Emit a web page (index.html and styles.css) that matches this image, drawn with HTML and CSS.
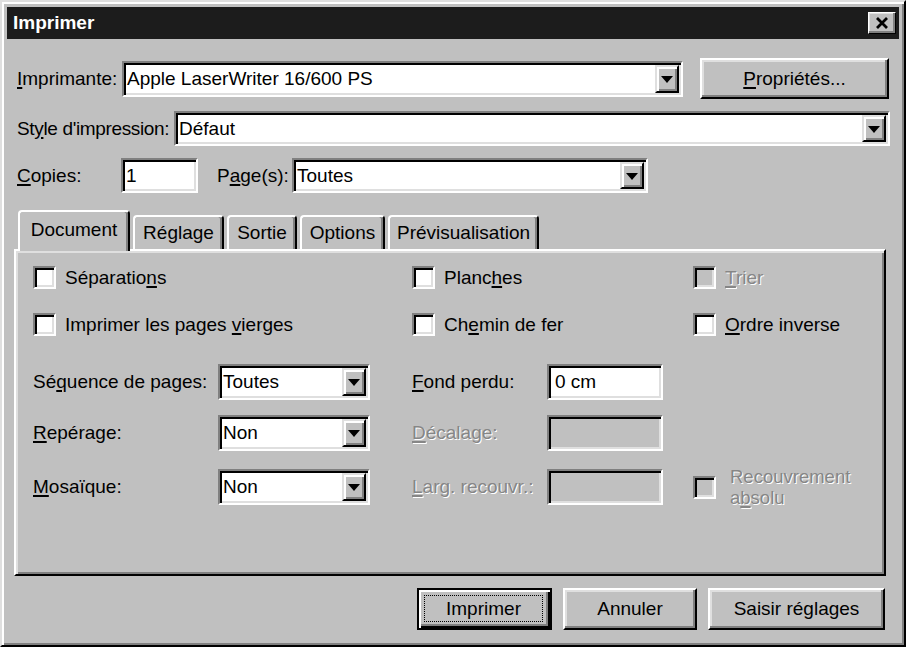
FILE: index.html
```html
<!DOCTYPE html>
<html lang="fr">
<head>
<meta charset="utf-8">
<title>Imprimer</title>
<link rel="stylesheet" href="styles.css">
</head>
<body>
<div class="window">
  <div class="titlebar">
    <span class="title">Imprimer</span>
    <div class="close">
      <svg width="14" height="12" viewBox="0 0 14 12"><path d="M2 1 L12 11 M12 1 L2 11" stroke="#000" stroke-width="2.8" fill="none"/></svg>
    </div>
  </div>
  <div class="content">
    <div class="row r1">
      <span class="lbl w105"><u>I</u>mprimante:</span>
      <div class="field combo w561"><span class="val">Apple LaserWriter 16/600 PS</span><span class="dd"><i class="arrow"></i></span></div>
      <div class="btn props"><span><u>P</u>ropriétés...</span></div>
    </div>
    <div class="row r2">
      <span class="lbl w157 tight">St<u>y</u>le d'impression:</span>
      <div class="field combo w716"><span class="val">Défaut</span><span class="dd"><i class="arrow"></i></span></div>
    </div>
    <div class="row r3">
      <span class="lbl w104"><u>C</u>opies:</span>
      <div class="field w77"><span class="val">1</span></div>
      <span class="lbl w75 ml19">P<u>a</u>ge(s):</span>
      <div class="field combo w356"><span class="val">Toutes</span><span class="dd"><i class="arrow"></i></span></div>
    </div>

    <div class="tabs">
      <div class="tab active t1">Document</div>
      <div class="tab t2">Réglage</div>
      <div class="tab t3">Sortie</div>
      <div class="tab t4">Options</div>
      <div class="tab t5">Prévisualisation</div>
    </div>
    <div class="panel">
      <div class="prow pa">
        <div class="cell"><span class="cb"></span><span>Séparatio<u>n</u>s</span></div>
        <div class="cell"><span class="cb"></span><span>Planc<u>h</u>es</span></div>
        <div class="cell"><span class="cb disabled"></span><span class="dis"><u>T</u>rier</span></div>
      </div>
      <div class="prow pb">
        <div class="cell"><span class="cb"></span><span>Imprimer les pages <u>v</u>ierges</span></div>
        <div class="cell"><span class="cb"></span><span>Ch<u>e</u>min de fer</span></div>
        <div class="cell"><span class="cb"></span><span><u>O</u>rdre inverse</span></div>
      </div>
      <div class="prow pf pf1">
        <div class="cell"><span class="flabel">Sé<u>q</u>uence de pages:</span><div class="field combo w152"><span class="val">Toutes</span><span class="dd"><i class="arrow"></i></span></div></div>
        <div class="cell"><span class="flabel2"><u>F</u>ond perdu:</span><div class="field w116"><span class="val v2">0 cm</span></div></div>
        <div class="cell"></div>
      </div>
      <div class="prow pf pf2">
        <div class="cell"><span class="flabel"><u>R</u>epérage:</span><div class="field combo w152"><span class="val">Non</span><span class="dd"><i class="arrow"></i></span></div></div>
        <div class="cell"><span class="flabel2 dis"><u>D</u>écalage:</span><div class="field disabled w116"></div></div>
        <div class="cell"></div>
      </div>
      <div class="prow pf pf3">
        <div class="cell"><span class="flabel"><u>M</u>osaïque:</span><div class="field combo w152"><span class="val">Non</span><span class="dd"><i class="arrow"></i></span></div></div>
        <div class="cell"><span class="flabel2 dis"><u>L</u>arg. recouvr.:</span><div class="field disabled w116"></div></div>
        <div class="cell"><span class="cb disabled"></span><span class="dis two">Recouvrement<br>a<u>b</u>solu</span></div>
      </div>
    </div>
    <div class="buttons">
      <div class="btn default b1"><span class="focus">Imprimer</span></div>
      <div class="btn b2"><span>Annuler</span></div>
      <div class="btn b3"><span>Saisir réglages</span></div>
    </div>
  </div>
</div>
</body>
</html>
```

FILE: styles.css
```css
html, body {
  margin: 0;
  padding: 0;
}
body {
  background: #ffffff;
  font-family: "Liberation Sans", Arial, sans-serif;
  font-size: 19px;
  color: #000;
}
u {
  text-decoration-thickness: 1.5px;
  text-underline-offset: 2px;
}
.window {
  width: 906px;
  height: 647px;
  box-sizing: border-box;
  background: #c0c0c0;
  border: 2px solid;
  border-color: #dfdfdf #000 #000 #dfdfdf;
  box-shadow: inset 2px 2px #fff, inset -2px -2px #808080;
  padding: 5px;
  display: flex;
  flex-direction: column;
}
.titlebar {
  height: 32px;
  flex: none;
  background: #1c1c1c;
  display: flex;
  align-items: center;
  justify-content: space-between;
  padding: 0 3px 0 6px;
}
.title {
  color: #fff;
  font-weight: bold;
  font-size: 19px;
}
.close {
  width: 28px;
  height: 22px;
  box-sizing: border-box;
  background: #c0c0c0;
  border: 1px solid;
  border-color: #fff #000 #000 #fff;
  box-shadow: inset -2px -2px #808080, inset 1px 1px #dfdfdf;
  display: flex;
  align-items: center;
  justify-content: center;
  padding-bottom: 1px;
}
.content {
  flex: 1;
  display: flex;
  flex-direction: column;
  padding: 0 13px 0 7px;
}
.row {
  display: flex;
  align-items: center;
  margin-left: 3px;
}
.row > * { flex: none; }
.r1 { margin-top: 19px; height: 41px; }
.r2, .r3 { margin-top: 12px; height: 35px; }
.lbl { white-space: nowrap; }
.tight { letter-spacing: -0.35px; }
.w105 { width: 105px; }
.w157 { width: 157px; }
.w104 { width: 104px; }
.w75 { width: 75px; }
.ml19 { margin-left: 19px; }
.w561 { width: 561px; }
.w716 { width: 716px; }
.w77 { width: 77px; }
.w356 { width: 356px; }
.w152 { width: 152px; }
.w116 { width: 116px; }

.field {
  height: 36px;
  box-sizing: border-box;
  border: 2px solid;
  border-color: #808080 #fff #fff #808080;
  box-shadow: inset 2px 2px #000, inset -2px -2px #dfdfdf;
  padding: 2px;
  background: #fff;
  display: flex;
  align-items: center;
  flex: none;
}
.r2 .field, .r3 .field { height: 35px; }
.field.disabled { background: #c0c0c0; }
.val {
  flex: 1;
  padding-left: 1px;
  white-space: nowrap;
  overflow: hidden;
}
.val.v2 { padding-left: 4px; }
.dd {
  flex: none;
  width: 24px;
  align-self: stretch;
  box-sizing: border-box;
  background: #c0c0c0;
  border: 2px solid;
  border-color: #dfdfdf #000 #000 #dfdfdf;
  box-shadow: inset 2px 2px #fff, inset -2px -2px #808080;
  display: flex;
  align-items: center;
  justify-content: center;
}
.arrow {
  width: 0;
  height: 0;
  border-left: 6px solid transparent;
  border-right: 6px solid transparent;
  border-top: 7px solid #000;
  margin-top: 1px;
}
.btn {
  box-sizing: border-box;
  background: #c0c0c0;
  border: 2px solid;
  border-color: #fff #000 #000 #fff;
  box-shadow: inset -2px -2px #808080, inset 2px 2px #dfdfdf;
  display: flex;
  align-items: center;
  justify-content: center;
  flex: none;
  white-space: nowrap;
}
.props { width: 189px; height: 41px; margin-left: 17px; }

.tabs {
  margin-top: 17px;
  height: 39px;
  flex: none;
  display: flex;
  align-items: flex-end;
  padding-left: 4px;
  gap: 3px;
}
.tab {
  height: 34px;
  box-sizing: border-box;
  background: #c0c0c0;
  border: 2px solid;
  border-bottom: none;
  border-color: #fff #000 transparent #fff;
  box-shadow: inset -2px 0 #808080;
  border-radius: 4px 4px 0 0;
  display: flex;
  align-items: center;
  justify-content: center;
  white-space: nowrap;
}
.tab.active {
  height: 41px;
  margin-bottom: -2px;
  position: relative;
  z-index: 1;
  padding-bottom: 4px;
}
.t1 { width: 112px; }
.t2 { width: 91px; }
.t3 { width: 70px; }
.t4 { width: 85px; }
.t5 { width: 151px; }

.panel {
  height: 327px;
  flex: none;
  box-sizing: border-box;
  border: 2px solid;
  border-color: #fff #000 #000 #fff;
  box-shadow: inset 2px 2px #dfdfdf, inset -2px -2px #808080;
  padding: 15px 0 0 17px;
}
.prow {
  display: grid;
  grid-template-columns: 379px 281px 1fr;
  align-items: center;
}
.pa { height: 23px; }
.pb { height: 23px; margin-top: 24px; }
.pf { height: 36px; }
.pf1 { margin-top: 28px; }
.pf2, .pf3 { margin-top: 15px; }
.cell {
  display: flex;
  align-items: center;
  height: 100%;
  white-space: nowrap;
}
.cb {
  width: 23px;
  height: 23px;
  box-sizing: border-box;
  border: 2px solid;
  border-color: #808080 #fff #fff #808080;
  box-shadow: inset 2px 2px #000, inset -2px -2px #dfdfdf;
  background: #fff;
  flex: none;
  margin-right: 9px;
}
.cb.disabled { background: #c0c0c0; }
.flabel { width: 185px; flex: none; }
.flabel2 { width: 135px; flex: none; }
.dis {
  color: #868686;
  text-shadow: 1px 1px 0 #fff;
}
.two {
  line-height: 21px;
  margin-left: 5px;
  font-size: 18.5px;
}

.buttons {
  display: flex;
  justify-content: flex-end;
  gap: 11px;
  margin-top: 12px;
  margin-right: 1px;
}
.b1, .b2, .b3 { height: 42px; }
.b1 { width: 135px; }
.b2 { width: 134px; }
.b3 { width: 177px; }
.btn.default {
  border: 2px solid #000;
  box-shadow: inset 2px 2px #fff, inset -2px -2px #000, inset -4px -4px #808080;
  padding: 5px 7px 6px 5px;
}
.focus {
  flex: 1;
  align-self: stretch;
  border: 1px dotted #000;
  display: flex;
  align-items: center;
  justify-content: center;
}
```
